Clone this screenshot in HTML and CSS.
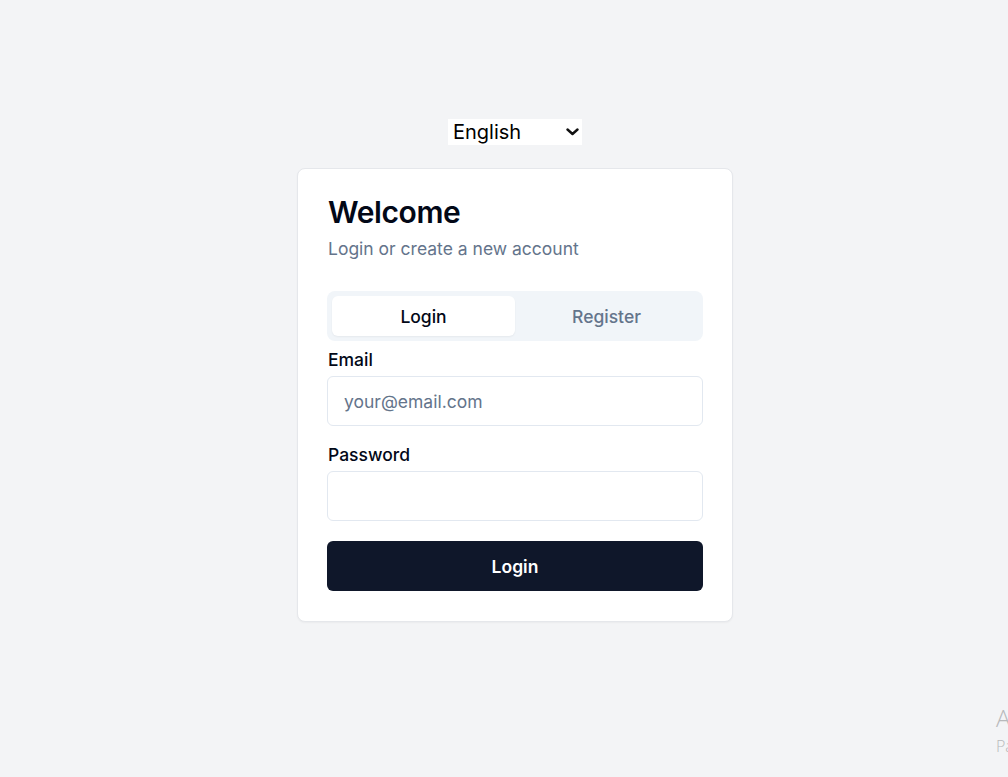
FILE: index.html
```html
<!DOCTYPE html>
<html lang="en">
<head>
<meta charset="utf-8">
<title>Welcome</title>
<link rel="stylesheet" href="styles.css">
</head>
<body>
<main class="page">
  <div class="lang-wrap">
    <select class="lang">
      <option>English</option>
      <option>Español</option>
    </select>
    <svg class="lang-chevron" width="13" height="8" viewBox="0 0 13 8" aria-hidden="true">
      <path d="M1.5 1.5 L6.5 6 L11.5 1.5" fill="none" stroke="#111" stroke-width="2.4" stroke-linecap="round" stroke-linejoin="round"/>
    </svg>
  </div>
  <section class="card">
    <header class="card-head">
      <h1 class="title">Welcome</h1>
      <p class="subtitle">Login or create a new account</p>
    </header>
    <div class="tabs">
      <button class="tab tab-active" type="button">Login</button>
      <button class="tab" type="button">Register</button>
    </div>
    <form class="form">
      <label class="field">
        <span class="label">Email</span>
        <input class="input" type="email" placeholder="your@email.com">
      </label>
      <label class="field field-last">
        <span class="label">Password</span>
        <input class="input" type="password">
      </label>
      <button class="submit" type="button">Login</button>
    </form>
  </section>
</main>
<div class="watermark">
  <div class="wm-title">Activate Windows</div>
  <div class="wm-sub">Parameters</div>
</div>
</body>
</html>
```
FILE: styles.css
```css
html, body {
  margin: 0;
  padding: 0;
  height: 100%;
  overflow: hidden;
}
body {
  background: #f3f4f6;
  font-family: Inter, "Noto Sans", sans-serif;
  color: #020817;
  position: relative;
}
.page {
  display: flex;
  flex-direction: column;
  align-items: center;
  padding-top: 119px;
  padding-left: 22px;
  gap: 23px;
}
.lang-wrap {
  position: relative;
  width: 134px;
  height: 26px;
}
.lang {
  appearance: none;
  -webkit-appearance: none;
  width: 134px;
  height: 26px;
  border: none;
  background: #ffffff;
  font-family: Inter, sans-serif;
  font-size: 20px;
  line-height: 26px;
  color: #000;
  padding: 0 0 0 5px;
  border-radius: 0;
  margin: 0;
  display: block;
}
.lang-chevron {
  position: absolute;
  right: 3px;
  top: 9px;
  pointer-events: none;
}
.card {
  box-sizing: border-box;
  width: 436px;
  background: #ffffff;
  border: 1px solid #e5e7eb;
  border-radius: 8px;
  padding: 30px;
  box-shadow: 0 1px 2px rgba(0,0,0,0.04);
}
.card-head {
  margin-bottom: 30px;
}
.title {
  margin: -5px 0 0;
  font-size: 30px;
  font-weight: 600;
  line-height: 36px;
  letter-spacing: -0.4px;
  color: #020817;
}
.subtitle {
  margin: 7px 0 0;
  font-size: 17.5px;
  line-height: 24px;
  color: #64748b;
}
.tabs {
  display: grid;
  grid-template-columns: 1fr 1fr;
  background: #f1f5f9;
  border-radius: 8px;
  padding: 5px;
  height: 50px;
  box-sizing: border-box;
  margin: 0 -1px;
}
.tab {
  border: none;
  background: transparent;
  font-family: Inter, sans-serif;
  font-size: 17.5px;
  font-weight: 500;
  color: #64748b;
  border-radius: 6px;
  cursor: pointer;
}
.tab-active {
  background: #ffffff;
  color: #020817;
  box-shadow: 0 1px 2px rgba(0,0,0,0.05);
}
.form {
  display: flex;
  flex-direction: column;
  margin-top: 7px;
}
.field {
  display: flex;
  flex-direction: column;
  gap: 4px;
  margin-bottom: 17px;
  margin-left: -1px;
  margin-right: -1px;
}
.field-last {
  margin-bottom: 20px;
}
.label {
  font-size: 17.5px;
  font-weight: 500;
  line-height: 24px;
  color: #020817;
  padding-left: 1px;
}
.input {
  box-sizing: border-box;
  height: 50px;
  border: 1px solid #e2e8f0;
  border-radius: 6px;
  padding: 0 16px;
  font-family: Inter, sans-serif;
  font-size: 17.5px;
  color: #020817;
  background: #fff;
  outline: none;
}
.input::placeholder {
  color: #64748b;
}
.submit {
  height: 50px;
  border: none;
  border-radius: 6px;
  background: #0f172a;
  color: #ffffff;
  font-family: Inter, sans-serif;
  font-size: 17.5px;
  font-weight: 600;
  margin: 0 -1px;
  cursor: pointer;
}
.watermark {
  position: absolute;
  left: 996px;
  top: 702px;
  color: #b8b9bb;
  white-space: nowrap;
}
.wm-title {
  font-family: "Open Sans", sans-serif;
  font-size: 24px;
  font-weight: 300;
  line-height: 32px;
}
.wm-sub {
  font-family: "Open Sans", sans-serif;
  font-size: 16px;
  font-weight: 300;
  line-height: 24px;
}
```
